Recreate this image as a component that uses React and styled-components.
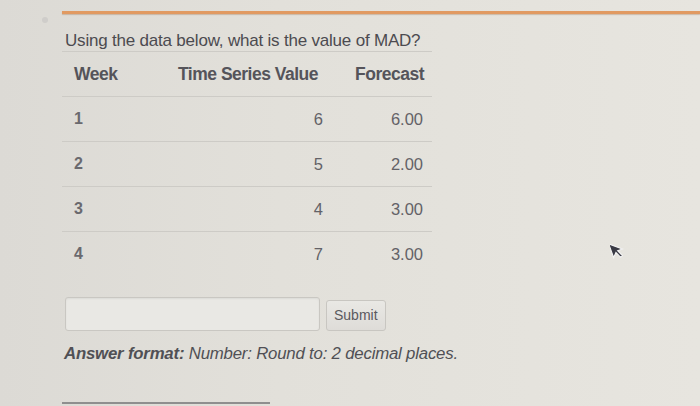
import React from "react";
import styled, { createGlobalStyle } from "styled-components";

const GlobalStyle = createGlobalStyle`
  html, body {
    margin: 0;
    padding: 0;
    width: 700px;
    height: 406px;
    overflow: hidden;
  }
  body {
    background: linear-gradient(90deg, #dcdad5 0%, #e2e0da 40%, #e7e5df 100%);
    font-family: "Liberation Sans", Arial, sans-serif;
    color: #58575a;
  }
`;

const Page = styled.div`
  position: relative;
  height: 406px;
  padding: 11px 0 0 62px;
  box-sizing: border-box;
  display: flex;
  flex-direction: column;
`;

const Dot = styled.span`
  position: absolute;
  left: 42px;
  top: 17px;
  width: 6px;
  height: 6px;
  border-radius: 50%;
  background: #cfcdca;
`;

const OrangeRule = styled.div`
  height: 3px;
  background: #e19a62;
  box-shadow: 0 1px 1px rgba(160, 110, 70, 0.35);
`;

const Title = styled.div`
  margin-top: 17px;
  padding: 0 0 0 3px;
  font-size: 17px;
  line-height: 20px;
  color: #4c4b50;
  letter-spacing: -0.2px;
`;

const Table = styled.div`
  width: 370px;
  border-top: 1px solid #cdcbc6;
`;

const Row = styled.div`
  display: grid;
  grid-template-columns: 100px 165px 105px;
  align-items: center;
  height: 44px;
  border-bottom: ${(p) => (p.$last ? "none" : "1px solid #cdcbc6")};
  font-size: ${(p) => (p.$head ? "17.5px" : "16.5px")};
  font-weight: ${(p) => (p.$head ? "bold" : "normal")};
  color: ${(p) => (p.$head ? "#55545a" : "#636267")};
  letter-spacing: ${(p) => (p.$head ? "-0.5px" : "0")};
`;

const Cell = styled.div`
  padding: 0 ${(p) => (p.$right ? p.$right : 0)}px 0 ${(p) => p.$pad || 0}px;
  text-align: ${(p) => (p.$right ? "right" : "left")};
  font-weight: ${(p) => (p.$bold ? "bold" : "inherit")};
  font-size: ${(p) => (p.$bold ? "16px" : "inherit")};
  color: ${(p) => (p.$bold ? "#6a696e" : "inherit")};
`;

const AnswerRow = styled.div`
  display: flex;
  align-items: center;
  gap: 6px;
  margin-top: 21px;
  padding-left: 3px;
`;

const Input = styled.input`
  width: 255px;
  height: 34px;
  box-sizing: border-box;
  border: 1px solid #c9c7c2;
  border-radius: 3px;
  background: #e9e8e4;
  box-shadow: inset 0 1px 2px rgba(0, 0, 0, 0.06);
`;

const SubmitButton = styled.button`
  height: 31px;
  padding: 0 7px;
  border: 1px solid #c8c6c1;
  border-radius: 3px;
  background: linear-gradient(#e9e8e4, #dedcd8);
  font-family: "Liberation Sans", Arial, sans-serif;
  font-size: 14px;
  color: #5a595e;
  margin-top: 2px;
`;

const Format = styled.div`
  margin-top: 13px;
  padding-left: 2px;
  font-size: 16.8px;
  font-style: italic;
  color: #505055;
  letter-spacing: -0.2px;
`;

const Strong = styled.span`
  font-weight: bold;
`;

const BottomRule = styled.div`
  margin-top: auto;
  margin-bottom: 2px;
  width: 208px;
  height: 2px;
  background: #8f8e8e;
`;

const Cursor = styled.svg`
  position: absolute;
  left: 610px;
  top: 240px;
`;

const rows = [
  ["1", "6", "6.00"],
  ["2", "5", "2.00"],
  ["3", "4", "3.00"],
  ["4", "7", "3.00"],
];

export default function App() {
  return (
    <>
      <GlobalStyle />
      <Page>
        <Dot />
        <OrangeRule />
        <Title>Using the data below, what is the value of MAD?</Title>
        <Table>
          <Row $head>
            <Cell $pad={12}>Week</Cell>
            <Cell $pad={16}>Time Series Value</Cell>
            <Cell $right={8}>Forecast</Cell>
          </Row>
          {rows.map((r, i) => (
            <Row key={r[0]} $last={i === rows.length - 1}>
              <Cell $pad={12} $bold>{r[0]}</Cell>
              <Cell $right={4}>{r[1]}</Cell>
              <Cell $right={9}>{r[2]}</Cell>
            </Row>
          ))}
        </Table>
        <AnswerRow>
          <Input />
          <SubmitButton>Submit</SubmitButton>
        </AnswerRow>
        <Format>
          <Strong>Answer format:</Strong> Number: Round to: 2 decimal places.
        </Format>
        <BottomRule />
        <Cursor width="16" height="20" viewBox="0 0 14 18">
          <path d="M1 1 L1 14 L4.5 10.5 L7 16 L9 15 L6.5 9.5 L11 9.5 Z" fill="#3a3a44" stroke="#f4f4f4" strokeWidth="1" transform="rotate(-20 7 9)" />
        </Cursor>
      </Page>
    </>
  );
}
